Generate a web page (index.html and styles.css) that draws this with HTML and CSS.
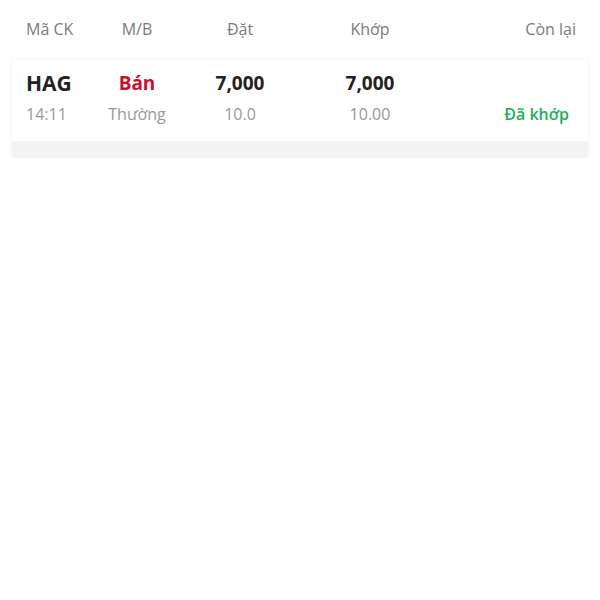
FILE: index.html
```html
<!DOCTYPE html>
<html lang="vi">
<head>
  <meta charset="UTF-8" />
  <meta name="viewport" content="width=device-width, initial-scale=1.0" />
  <title>Sổ lệnh</title>
  <link rel="stylesheet" href="styles.css">
</head>
<body>
  <div class="header">
    <span class="left">Mã CK</span>
    <span>M/B</span>
    <span>Đặt</span>
    <span>Khớp</span>
    <span class="right">Còn lại</span>
  </div>

  <div class="order">
    <div class="order-row">
      <span class="left code">HAG</span>
      <span class="side sell">Bán</span>
      <span class="num">7,000</span>
      <span class="num">7,000</span>
      <span class="right"></span>

      <span class="left sub">14:11</span>
      <span class="sub">Thường</span>
      <span class="sub">10.0</span>
      <span class="sub">10.00</span>
      <span class="right status">Đã khớp</span>
    </div>
    <div class="order-foot"></div>
  </div>
</body>
</html>
```

FILE: styles.css
```css
body {
  margin: 0;
  font-family: "Open Sans", "Noto Sans", sans-serif;
  background: #fff;
  color: #222;
}
.header, .order-row {
  display: grid;
  grid-template-columns: 74px 74px 132px 128px 1fr;
  text-align: center;
  align-items: center;
}
.header {
  height: 58px;
  padding: 0 24px 0 26px;
  font-size: 16px;
  color: #7a7a7a;
}
.left {
  text-align: left;
}
.right {
  text-align: right;
}
.order {
  margin: 2px 12px 0;
  background: #fff;
  border-radius: 4px;
  box-shadow: 0 0 4px rgba(0,0,0,0.07);
  overflow: hidden;
}
.order-row {
  padding: 9px 19px 16px 14px;
  row-gap: 6px;
}
.code {
  font-size: 21px;
  font-weight: 700;
  color: #222;
}
.side {
  font-size: 19px;
  font-weight: 700;
}
.sell {
  color: #c8102e;
}
.num {
  font-size: 19px;
  font-weight: 700;
  color: #222;
}
.sub {
  font-size: 16px;
  color: #999;
}
.status {
  font-size: 16px;
  font-weight: 600;
  color: #1fae57;
}
.order-foot {
  height: 17px;
  background: #f3f3f3;
}
```
